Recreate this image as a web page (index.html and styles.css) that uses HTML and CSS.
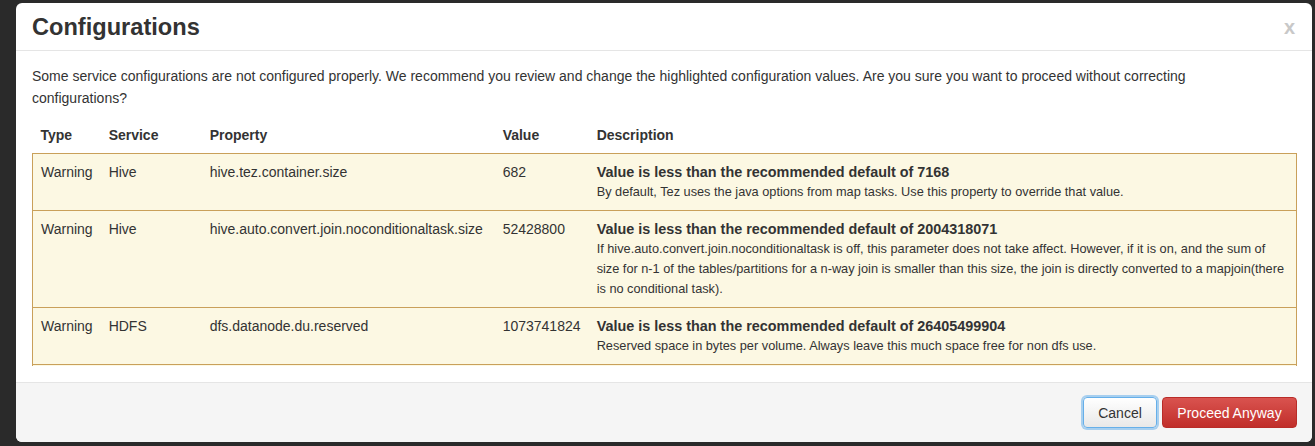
FILE: index.html
```html
<!DOCTYPE html>
<html>
<head>
<meta charset="utf-8">
<link rel="stylesheet" href="styles.css">
</head>
<body>
<div class="modal">
  <div class="modal-header">
    <h3 class="modal-title">Configurations</h3>
    <span class="close">x</span>
  </div>
  <div class="modal-body">
    <p class="intro">Some service configurations are not configured properly. We recommend you review and change the highlighted configuration values. Are you sure you want to proceed without correcting configurations?</p>
    <div class="scroll">
      <table class="cfg">
        <thead>
          <tr>
            <th class="c-type">Type</th>
            <th class="c-service">Service</th>
            <th class="c-prop">Property</th>
            <th class="c-value">Value</th>
            <th class="c-desc">Description</th>
          </tr>
        </thead>
        <tbody>
          <tr class="warn">
            <td>Warning</td>
            <td>Hive</td>
            <td>hive.tez.container.size</td>
            <td>682</td>
            <td><div class="d-title">Value is less than the recommended default of 7168</div><div class="d-text">By default, Tez uses the java options from map tasks. Use this property to override that value.</div></td>
          </tr>
          <tr class="warn">
            <td>Warning</td>
            <td>Hive</td>
            <td>hive.auto.convert.join.noconditionaltask.size</td>
            <td>52428800</td>
            <td><div class="d-title">Value is less than the recommended default of 2004318071</div><div class="d-text">If hive.auto.convert.join.noconditionaltask is off, this parameter does not take affect. However, if it is on, and the sum of size for n-1 of the tables/partitions for a n-way join is smaller than this size, the join is directly converted to a mapjoin(there is no conditional task).</div></td>
          </tr>
          <tr class="warn">
            <td>Warning</td>
            <td>HDFS</td>
            <td>dfs.datanode.du.reserved</td>
            <td>1073741824</td>
            <td><div class="d-title">Value is less than the recommended default of 26405499904</div><div class="d-text">Reserved space in bytes per volume. Always leave this much space free for non dfs use.</div></td>
          </tr>
        </tbody>
      </table>
      <div class="more"></div>
    </div>
  </div>
  <div class="modal-footer">
    <button class="btn btn-default">Cancel</button>
    <button class="btn btn-danger">Proceed Anyway</button>
  </div>
</div>
</body>
</html>
```

FILE: styles.css
```css
html, body {
  margin: 0;
  height: 100%;
}
body {
  background: #2a2a2a;
  font-family: "Liberation Sans", Arial, sans-serif;
  color: #333;
  padding: 3px 3px 4px 16px;
  box-sizing: border-box;
  overflow: hidden;
}
.modal {
  width: 1296px;
  height: 439px;
  background: #fff;
  border-radius: 6px;
  display: flex;
  flex-direction: column;
  overflow: hidden;
}
.modal-header {
  height: 48px;
  box-sizing: border-box;
  border-bottom: 1px solid #e5e5e5;
  display: flex;
  align-items: center;
  justify-content: space-between;
  padding: 0 15px 0 16px;
  flex: none;
}
.modal-title {
  margin: 0;
  font-size: 23.6px;
  font-weight: bold;
  color: #333;
  line-height: 1;
  position: relative;
  top: 1px;
}
.close {
  font-size: 20px;
  font-weight: bold;
  color: #c8c8c8;
  line-height: 1;
  margin-right: 2px;
}
.modal-body {
  flex: 1;
  min-height: 0;
  padding: 14px 15px 16px 16px;
  display: flex;
  flex-direction: column;
}
.intro {
  margin: 0 0 8px;
  max-width: 1220px;
  font-size: 14px;
  line-height: 22px;
}
.scroll {
  flex: 1;
  min-height: 0;
  overflow: hidden;
}
.cfg {
  width: 100%;
  border-collapse: collapse;
  font-size: 14px;
}
.cfg th {
  text-align: left;
  font-weight: bold;
  padding: 8px 8px;
  line-height: 20px;
}
.cfg td {
  padding: 8px 8px;
  line-height: 20px;
  vertical-align: top;
  border-top: 1px solid #c9a05a;
  border-bottom: 1px solid #c9a05a;
}
.cfg tr.warn {
  background: #fcf8e3;
}
.cfg tr.warn td:first-child {
  border-left: 1px solid #c9a05a;
}
.cfg tr.warn td:last-child {
  border-right: 1px solid #c9a05a;
}
.c-type { width: 52px; }
.c-service { width: 85px; }
.c-prop { width: 277px; }
.c-value { width: 78px; }
.d-title {
  font-weight: bold;
  font-size: 14.4px;
}
.d-text {
  font-size: 12.75px;
}
.more {
  height: 3px;
  background: #fcf8e3;
  border-left: 1px solid #c9a05a;
  border-right: 1px solid #c9a05a;
}
.modal-footer {
  flex: none;
  height: 60px;
  box-sizing: border-box;
  border-top: 1px solid #e5e5e5;
  background: #f5f5f5;
  display: flex;
  align-items: center;
  justify-content: flex-end;
  gap: 5px;
  padding: 0 15px 0 16px;
}
.btn {
  font-family: "Liberation Sans", Arial, sans-serif;
  font-size: 14px;
  height: 31px;
  border-radius: 4px;
  padding: 0 10px;
  cursor: pointer;
}
.btn-default {
  width: 74px;
  color: #333;
  background: linear-gradient(#fff, #e8e8e8);
  border: 1px solid #66afe9;
  box-shadow: 0 0 0 2px rgba(102, 175, 233, 0.55);
}
.btn-danger {
  width: 135px;
  color: #fff;
  background: linear-gradient(#d9534f, #c12e2a);
  border: 1px solid #b92c28;
}
```
